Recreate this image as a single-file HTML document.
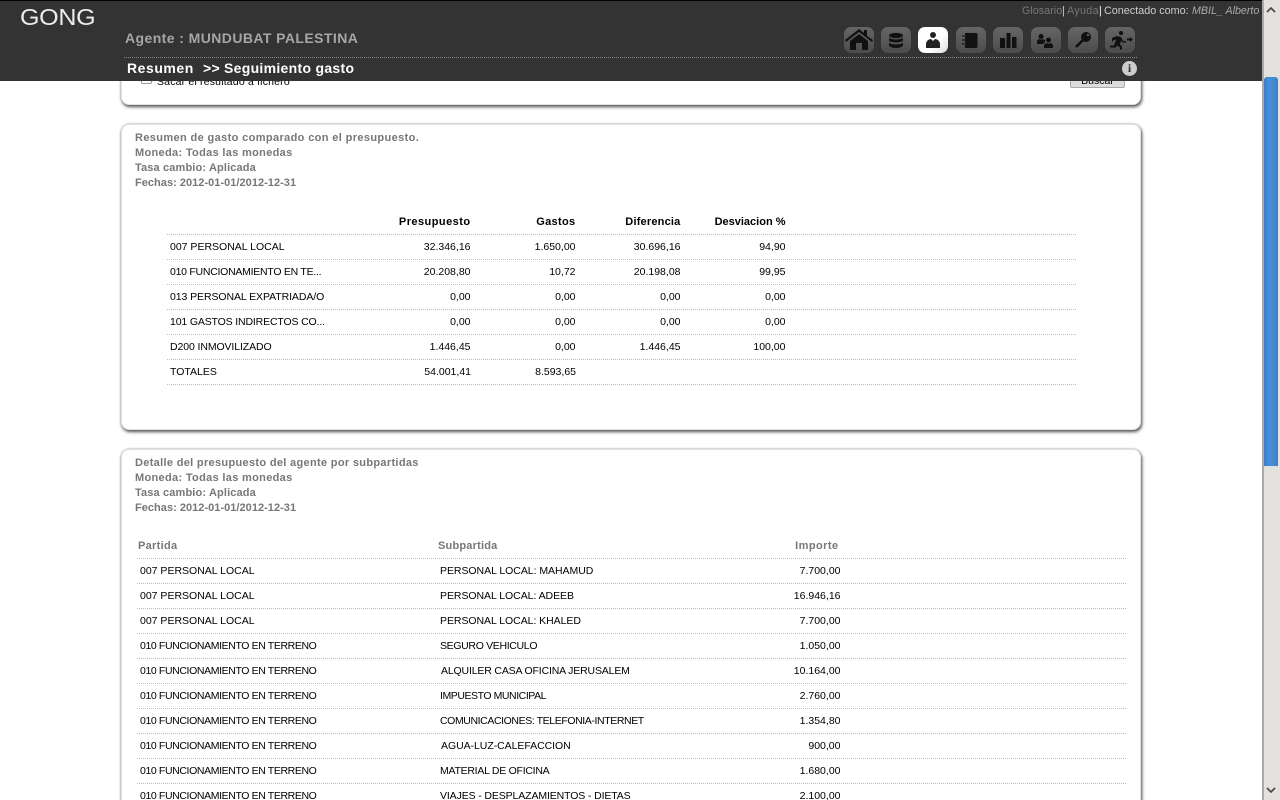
<!DOCTYPE html>
<html lang="es"><head><meta charset="utf-8"><title>GONG</title>
<style>
html,body{margin:0;padding:0;width:1280px;height:800px;overflow:hidden;background:#fff;font-family:"Liberation Sans",sans-serif}
#v{position:absolute;left:0;top:0;width:1262px;height:800px;overflow:hidden}
.p{position:absolute;left:121px;width:1018px;border:1px solid #e2e2e2;border-radius:8px;box-shadow:1px 2px 3px 0 #555,0 0 2px 0 #aaa;background:#fff;box-sizing:content-box}
.t{position:absolute;white-space:nowrap;font-size:10.5px;line-height:14px;color:#000}
.r{text-align:right}
.b{font-weight:bold}
.h{position:absolute;left:135px;font-size:11px;line-height:15px;font-weight:bold;color:#777;white-space:nowrap}
.g{color:#777}
.l{position:absolute;height:0;border-top:1px dotted #bbb}
#hd{position:absolute;left:0;top:0;width:1262px;height:81px;background:#333;border-top:1px solid #000;box-sizing:border-box}
.i{position:absolute;top:27px;width:30px;height:26px;border-radius:7px;background:linear-gradient(#666,#4c4c4c)}
.i svg{position:absolute;left:0;top:0}
#sb{position:absolute;left:1262px;top:0;width:18px;height:800px;background:#e3e1de;border-left:2px solid #aaa;box-sizing:border-box}
#th{position:absolute;left:1264px;top:77px;width:14px;height:389px;border-radius:3px 3px 0 0;background:linear-gradient(90deg,#3a7fc8,#4a90dc 40%,#3a7fc8)}
</style></head><body>
<div id="v">
<div class="p" style="top:-20px;height:123px"></div>
<div style="position:absolute;left:141px;top:75px;width:11px;height:9px;border:1px solid #999;border-radius:2px;box-sizing:border-box"></div>
<div class="t" style="left:157px;top:75px;letter-spacing:.18px">Sacar el resultado a fichero</div>
<div style="position:absolute;left:1070px;top:70px;width:55px;height:18px;border:1px solid #aaa;border-radius:2px;background:#ddd;box-sizing:border-box;font-size:10.5px;text-align:center;line-height:20px">Buscar</div>

<div class="p" style="top:124px;height:304px"></div>
<div class="h" style="top:131px;letter-spacing:.37px">Resumen de gasto comparado con el presupuesto.</div>
<div class="h" style="top:146px;letter-spacing:.32px">Moneda: Todas las monedas</div>
<div class="h" style="top:161px;letter-spacing:.14px">Tasa cambio: Aplicada</div>
<div class="h" style="top:176px;letter-spacing:.03px">Fechas: 2012-01-01/2012-12-31</div>

<div class="t b r" style="left:370px;width:100.500px;top:215px;font-size:11px;letter-spacing:.45px">Presupuesto</div>
<div class="t b r" style="left:475px;width:100.500px;top:215px;font-size:11px;letter-spacing:.33px">Gastos</div>
<div class="t b r" style="left:580px;width:100.500px;top:215px;font-size:11px;letter-spacing:.2px">Diferencia</div>
<div class="t b r" style="left:685px;width:100.500px;top:215px;font-size:11px">Desviacion %</div>

<div class="l" style="left:167px;width:909px;top:234px"></div>
<div class="l" style="left:167px;width:909px;top:259px"></div>
<div class="l" style="left:167px;width:909px;top:284px"></div>
<div class="l" style="left:167px;width:909px;top:309px"></div>
<div class="l" style="left:167px;width:909px;top:334px"></div>
<div class="l" style="left:167px;width:909px;top:359px"></div>
<div class="l" style="left:167px;width:909px;top:384px"></div>

<div class="t" style="left:170px;top:240px">007 PERSONAL LOCAL</div>
<div class="t r" style="left:370px;width:100.500px;top:240px">32.346,16</div>
<div class="t r" style="left:475px;width:100.500px;top:240px">1.650,00</div>
<div class="t r" style="left:580px;width:100.500px;top:240px">30.696,16</div>
<div class="t r" style="left:685px;width:100.500px;top:240px">94,90</div>

<div class="t" style="left:170px;top:265px;letter-spacing:-.26px">010 FUNCIONAMIENTO EN TE...</div>
<div class="t r" style="left:370px;width:100.500px;top:265px">20.208,80</div>
<div class="t r" style="left:475px;width:100.500px;top:265px">10,72</div>
<div class="t r" style="left:580px;width:100.500px;top:265px">20.198,08</div>
<div class="t r" style="left:685px;width:100.500px;top:265px">99,95</div>

<div class="t" style="left:170px;top:290px;letter-spacing:-.08px">013 PERSONAL EXPATRIADA/O</div>
<div class="t r" style="left:370px;width:100.500px;top:290px">0,00</div>
<div class="t r" style="left:475px;width:100.500px;top:290px">0,00</div>
<div class="t r" style="left:580px;width:100.500px;top:290px">0,00</div>
<div class="t r" style="left:685px;width:100.500px;top:290px">0,00</div>

<div class="t" style="left:170px;top:315px;letter-spacing:-.15px">101 GASTOS INDIRECTOS CO...</div>
<div class="t r" style="left:370px;width:100.500px;top:315px">0,00</div>
<div class="t r" style="left:475px;width:100.500px;top:315px">0,00</div>
<div class="t r" style="left:580px;width:100.500px;top:315px">0,00</div>
<div class="t r" style="left:685px;width:100.500px;top:315px">0,00</div>

<div class="t" style="left:170px;top:340px;letter-spacing:-.1px">D200 INMOVILIZADO</div>
<div class="t r" style="left:370px;width:100.500px;top:340px">1.446,45</div>
<div class="t r" style="left:475px;width:100.500px;top:340px">0,00</div>
<div class="t r" style="left:580px;width:100.500px;top:340px">1.446,45</div>
<div class="t r" style="left:685px;width:100.500px;top:340px">100,00</div>

<div class="t" style="left:170px;top:365px">TOTALES</div>
<div class="t r" style="left:370px;width:101px;top:365px">54.001,41</div>
<div class="t r" style="left:475px;width:101px;top:365px">8.593,65</div>

<div class="p" style="top:449px;height:400px"></div>
<div class="h" style="top:456px;letter-spacing:.32px">Detalle del presupuesto del agente por subpartidas</div>
<div class="h" style="top:471px;letter-spacing:.32px">Moneda: Todas las monedas</div>
<div class="h" style="top:486px;letter-spacing:.14px">Tasa cambio: Aplicada</div>
<div class="h" style="top:501px;letter-spacing:.03px">Fechas: 2012-01-01/2012-12-31</div>

<div class="t b g" style="left:138px;top:539px;font-size:11px;letter-spacing:.3px">Partida</div>
<div class="t b g" style="left:438px;top:539px;font-size:11px;letter-spacing:.2px">Subpartida</div>
<div class="t b g r" style="left:738px;width:100.500px;top:539px;font-size:11px;letter-spacing:.43px">Importe</div>

<div class="l" style="left:137px;width:989px;top:558px"></div>
<div class="l" style="left:137px;width:989px;top:583px"></div>
<div class="l" style="left:137px;width:989px;top:608px"></div>
<div class="l" style="left:137px;width:989px;top:633px"></div>
<div class="l" style="left:137px;width:989px;top:658px"></div>
<div class="l" style="left:137px;width:989px;top:683px"></div>
<div class="l" style="left:137px;width:989px;top:708px"></div>
<div class="l" style="left:137px;width:989px;top:733px"></div>
<div class="l" style="left:137px;width:989px;top:758px"></div>
<div class="l" style="left:137px;width:989px;top:783px"></div>

<div class="t" style="left:140px;top:564px">007 PERSONAL LOCAL</div><div class="t" style="left:440px;top:564px;letter-spacing:-.04px">PERSONAL LOCAL: MAHAMUD</div><div class="t r" style="left:740px;width:100.500px;top:564px">7.700,00</div>
<div class="t" style="left:140px;top:589px">007 PERSONAL LOCAL</div><div class="t" style="left:440px;top:589px;letter-spacing:-.05px">PERSONAL LOCAL: ADEEB</div><div class="t r" style="left:740px;width:100.500px;top:589px">16.946,16</div>
<div class="t" style="left:140px;top:614px">007 PERSONAL LOCAL</div><div class="t" style="left:440px;top:614px;letter-spacing:-.05px">PERSONAL LOCAL: KHALED</div><div class="t r" style="left:740px;width:100.500px;top:614px">7.700,00</div>
<div class="t" style="left:140px;top:639px;letter-spacing:-.38px">010 FUNCIONAMIENTO EN TERRENO</div><div class="t" style="left:440px;top:639px;letter-spacing:-.33px">SEGURO VEHICULO</div><div class="t r" style="left:740px;width:100.500px;top:639px">1.050,00</div>
<div class="t" style="left:140px;top:664px;letter-spacing:-.38px">010 FUNCIONAMIENTO EN TERRENO</div><div class="t" style="left:441px;top:664px;letter-spacing:-.16px">ALQUILER CASA OFICINA JERUSALEM</div><div class="t r" style="left:740px;width:100.500px;top:664px">10.164,00</div>
<div class="t" style="left:140px;top:689px;letter-spacing:-.38px">010 FUNCIONAMIENTO EN TERRENO</div><div class="t" style="left:440px;top:689px;letter-spacing:-.44px">IMPUESTO MUNICIPAL</div><div class="t r" style="left:740px;width:100.500px;top:689px">2.760,00</div>
<div class="t" style="left:140px;top:714px;letter-spacing:-.38px">010 FUNCIONAMIENTO EN TERRENO</div><div class="t" style="left:440px;top:714px;letter-spacing:-.4px">COMUNICACIONES: TELEFONIA-INTERNET</div><div class="t r" style="left:740px;width:100.500px;top:714px">1.354,80</div>
<div class="t" style="left:140px;top:739px;letter-spacing:-.38px">010 FUNCIONAMIENTO EN TERRENO</div><div class="t" style="left:441px;top:739px;letter-spacing:-.05px">AGUA-LUZ-CALEFACCION</div><div class="t r" style="left:740px;width:100.500px;top:739px">900,00</div>
<div class="t" style="left:140px;top:764px;letter-spacing:-.38px">010 FUNCIONAMIENTO EN TERRENO</div><div class="t" style="left:440px;top:764px;letter-spacing:-.26px">MATERIAL DE OFICINA</div><div class="t r" style="left:740px;width:100.500px;top:764px">1.680,00</div>
<div class="t" style="left:140px;top:789px;letter-spacing:-.38px">010 FUNCIONAMIENTO EN TERRENO</div><div class="t" style="left:440px;top:789px;letter-spacing:-.12px">VIAJES - DESPLAZAMIENTOS - DIETAS</div><div class="t r" style="left:740px;width:100.500px;top:789px">2.100,00</div>
</div>

<div id="hd"></div>
<div class="t" style="left:20px;top:4px;font-size:23px;line-height:26px;color:#ececec;transform:scaleX(1.09);transform-origin:0 0;letter-spacing:-.3px">GONG</div>
<div class="t b" style="left:125px;top:30px;font-size:14px;line-height:16px;color:#a6a6a6;letter-spacing:.42px">Agente : MUNDUBAT PALESTINA</div>
<div class="l" style="left:124px;width:1013px;top:57px;border-top-color:#8a8a8a"></div>
<div class="t b" style="left:127px;top:60px;font-size:14px;line-height:16px;color:#fff;letter-spacing:.55px">Resumen</div>
<div class="t b" style="left:203px;top:60px;font-size:14px;line-height:16px;color:#fff;letter-spacing:.3px">&gt;&gt;</div>
<div class="t b" style="left:224px;top:60px;font-size:14px;line-height:16px;color:#fff;letter-spacing:.3px">Seguimiento gasto</div>

<div class="t" style="left:1022px;top:4px;font-size:10.800px;color:#777">Glosario</div>
<div class="t" style="left:1062px;top:4px;font-size:10.800px;color:#ccc">|</div>
<div class="t" style="left:1067px;top:4px;font-size:10.800px;color:#777;letter-spacing:.3px">Ayuda</div>
<div class="t" style="left:1099px;top:4px;font-size:10.800px;color:#eee">|</div>
<div class="t" style="left:1104px;top:4px;font-size:10.800px;color:#ccc">Conectado como:</div>
<div class="t" style="left:1192px;top:4px;font-size:10.700px;color:#aaa;font-style:italic">MBIL_ Alberto</div>

<div class="i" style="left:844px"><svg width="30" height="26" viewBox="0 0 30 26"><path d="M1 13L15 2l5 4V3h3v6l6 4-1 2-13-10L2 15z" fill="#111"/><path d="M6 14l9-7 9 7v9h-6v-7h-6v7H6z" fill="#111"/></svg></div>
<div class="i" style="left:881px"><svg width="30" height="26" viewBox="0 0 30 26"><ellipse cx="15" cy="8.500" rx="7" ry="2.600" fill="#111"/><path d="M8 10.500c2 2.600 12 2.600 14 0v3c-2 2.600-12 2.600-14 0zM8 15.500c2 2.600 12 2.600 14 0v3c-2 3.400-12 3.400-14 0z" fill="#111"/></svg></div>
<div class="i" style="left:918px;background:linear-gradient(135deg,#fff 60%,#ddd)"><svg width="30" height="26" viewBox="0 0 30 26"><circle cx="15" cy="8" r="3" fill="#222"/><path d="M8 21v-4c0-3 3-5 5-5l2 2 2-2c2 0 5 2 5 5v4z" fill="#222"/></svg></div>
<div class="i" style="left:956px"><svg width="30" height="26" viewBox="0 0 30 26"><path d="M9 6h11a1.500 1.500 0 0 1 1.500 1.500v12A1.500 1.500 0 0 1 20 21H9z" fill="#111"/><path d="M6 9h4M6 13h4M6 17h4" stroke="#222" stroke-width="1.400"/></svg></div>
<div class="i" style="left:993px"><svg width="30" height="26" viewBox="0 0 30 26"><path d="M7 11h5v10H7zM13.500 6h4v15h-4zM19 10h4.500v11H19z" fill="#111"/></svg></div>
<div class="i" style="left:1031px"><svg width="30" height="26" viewBox="0 0 30 26"><circle cx="10" cy="9.500" r="2.500" fill="#111"/><path d="M6 17v-2c0-2 1.500-3 3-3l1 1 1-1 3 1v2l-2 2z" fill="#111"/><circle cx="17.500" cy="13" r="2.500" fill="#111"/><path d="M13 21v-2c0-2 2-3 3-3l1.500 1 1.500-1c1 0 3 1 3 3v2z" fill="#111"/></svg></div>
<div class="i" style="left:1068px"><svg width="30" height="26" viewBox="0 0 30 26"><circle cx="18" cy="10" r="5" fill="#111"/><path d="M15 13L8 20" stroke="#111" stroke-width="2.600"/><circle cx="20" cy="8" r="1" fill="#777"/></svg></div>
<div class="i" style="left:1105px"><svg width="30" height="26" viewBox="0 0 30 26"><circle cx="16" cy="6" r="2" fill="#111"/><path d="M7 11l5-2 4 1 2 4h3v1.500h-4l-1-2-1 4 2 2v3h-2v-2l-3-2-1 2H5v-2h4l2-6-3 1-1 2z" fill="#111"/><path d="M22 11.500h3V10l3 2.500-3 2.500v-1.500h-3z" fill="#111"/></svg></div>

<div style="position:absolute;left:1122px;top:61px;width:15px;height:15px;border-radius:50%;background:#ccc;color:#333;font:bold 12px/15px 'Liberation Serif',serif;text-align:center">i</div>

<div id="sb"></div>
<div id="th"></div>
<svg style="position:absolute;left:1264px;top:3px" width="14" height="14" viewBox="0 0 14 14"><path d="M3 9l4-4 4 4" fill="none" stroke="#444" stroke-width="1.600"/></svg>
<svg style="position:absolute;left:1264px;top:783px" width="14" height="14" viewBox="0 0 14 14"><path d="M3 5l4 4 4-4" fill="none" stroke="#444" stroke-width="1.600"/></svg>
</body></html>
